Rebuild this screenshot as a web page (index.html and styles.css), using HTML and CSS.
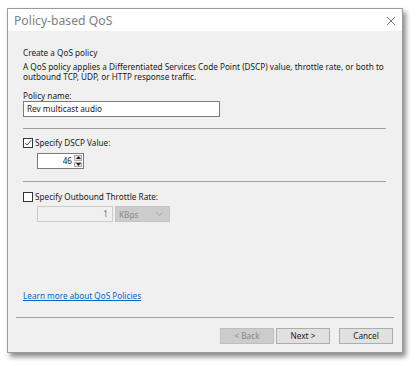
FILE: index.html
```html
<!DOCTYPE html>
<html>
<head>
<meta charset="utf-8">
<link rel="stylesheet" href="styles.css">
</head>
<body>
<div class="window">
  <div class="titlebar">
    <span class="title">Policy-based QoS</span>
    <svg class="close" width="10" height="10" viewBox="0 0 10 10"><path d="M1 1 L9 9 M9 1 L1 9" stroke="#7a7a7a" stroke-width="1" fill="none"/></svg>
  </div>
  <div class="content">
    <div class="heading">Create a QoS policy</div>
    <div class="desc">A QoS policy applies a Differentiated Services Code Point (DSCP) value, throttle rate, or both to outbound TCP, UDP, or HTTP response traffic.</div>
    <div class="label">Policy name:</div>
    <div class="textbox">Rev multicast audio</div>
    <div class="sep"></div>
    <div class="check-row">
      <span class="checkbox checked"><svg width="10" height="10" viewBox="0 0 10 10"><path d="M1.5 5 L4 7.5 L9 1.5" stroke="#222" stroke-width="1.1" fill="none"/></svg></span>
      <span>Specify DSCP Value:</span>
    </div>
    <div class="spin">
      <span class="spin-val">46</span>
      <span class="spin-btns">
        <span class="spin-btn"><svg width="5" height="3" viewBox="0 0 5 3"><path d="M0 3 L2.5 0 L5 3Z" fill="#222"/></svg></span>
        <span class="spin-btn"><svg width="5" height="3" viewBox="0 0 5 3"><path d="M0 0 L2.5 3 L5 0Z" fill="#222"/></svg></span>
      </span>
    </div>
    <div class="sep sep2"></div>
    <div class="check-row">
      <span class="checkbox"></span>
      <span>Specify Outbound Throttle Rate:</span>
    </div>
    <div class="rate-row">
      <span class="rate-box">1</span>
      <span class="combo">KBps<svg width="7" height="4" viewBox="0 0 7 4"><path d="M0.5 0.5 L3.5 3.5 L6.5 0.5" stroke="#a0a0a0" fill="none"/></svg></span>
    </div>
    <div class="spacer"></div>
    <a class="link" href="#">Learn more about QoS Policies</a>
  </div>
  <div class="footer">
    <div class="btn disabled">&lt; Back</div>
    <div class="btn">Next &gt;</div>
    <div class="btn cancel">Cancel</div>
  </div>
</div>
</body>
</html>
```
FILE: styles.css
```css
html, body {
  margin: 0;
  padding: 0;
  background: #ffffff;
}
body {
  font-family: "Noto Sans", "Open Sans", sans-serif;
  font-size: 8.2px;
  color: #1a1a1a;
  width: 416px;
  height: 366px;
  overflow: hidden;
}
.window {
  margin: 8px 0 0 7px;
  width: 396px;
  height: 345px;
  box-sizing: border-box;
  border: 1px solid #9c9c9c;
  background: #f0f0f0;
  display: flex;
  flex-direction: column;
  box-shadow: 3px 4px 5px rgba(0, 0, 0, 0.45);
}
.titlebar {
  height: 22px;
  background: #ffffff;
  display: flex;
  align-items: center;
  justify-content: space-between;
  padding: 0 6px 0 6px;
  flex: none;
}
.title {
  font-size: 12.2px;
  color: #808080;
  font-family: "Noto Sans", sans-serif;
}
.close {
  margin-top: 2px;
}
.content {
  flex: 1;
  display: flex;
  flex-direction: column;
  padding: 16px 9px 0 15px;
}
.heading {
  line-height: 11px;
}
.desc {
  margin-top: 4px;
  line-height: 10px;
  width: 370px;
}
.label {
  margin-top: 8px;
  line-height: 11px;
}
.textbox {
  margin-top: 0;
  width: 197px;
  height: 16px;
  box-sizing: border-box;
  border: 1px solid #7a7a7a;
  background: #ffffff;
  line-height: 14px;
  padding-left: 3px;
}
.sep {
  margin-top: 11px;
  height: 1px;
  background: #a0a0a0;
  width: 363px;
}
.check-row {
  margin-top: 8px;
  display: flex;
  align-items: center;
  gap: 2px;
  line-height: 11px;
}
.checkbox {
  width: 10px;
  height: 10px;
  box-sizing: border-box;
  border: 1px solid #333333;
  background: #ffffff;
  display: flex;
  align-items: center;
  justify-content: center;
  flex: none;
}
.spin {
  margin: 5px 0 0 14px;
  width: 47px;
  height: 16px;
  box-sizing: border-box;
  border: 1px solid #7a7a7a;
  background: #ffffff;
  display: flex;
}
.spin-val {
  flex: 1;
  text-align: right;
  line-height: 14px;
  padding-right: 2px;
}
.spin-btns {
  width: 8px;
  display: flex;
  flex-direction: column;
  gap: 1px;
  padding: 1px 1px 1px 0;
}
.spin-btn {
  flex: 1;
  background: #e4e4e4;
  border: 1px solid #adadad;
  display: flex;
  align-items: center;
  justify-content: center;
  box-sizing: border-box;
}
.sep2 {
  margin-top: 12px;
}
.sep2 + .check-row {
  margin-top: 9px;
}
.rate-row {
  margin: 4px 0 0 14px;
  display: flex;
  gap: 2px;
}
.rate-box {
  width: 76px;
  height: 16px;
  box-sizing: border-box;
  border: 1px solid #cccccc;
  background: #f0f0f0;
  color: #6d6d6d;
  text-align: right;
  line-height: 14px;
  padding-right: 4px;
}
.combo {
  width: 55px;
  height: 16px;
  box-sizing: border-box;
  background: #cccccc;
  border: 1px solid #c4c4c4;
  color: #8a8a8a;
  display: flex;
  align-items: center;
  justify-content: space-between;
  padding: 0 6px 0 3px;
}
.spacer {
  flex: 1;
}
.link {
  color: #0066cc;
  text-decoration: underline;
  line-height: 11px;
  margin-bottom: 16px;
  align-self: flex-start;
}
.footer {
  flex: none;
  margin: 0 8px 0 8px;
  border-top: 1px solid #a0a0a0;
  padding: 10px 1px 8px 0;
  display: flex;
  justify-content: flex-end;
  gap: 2px;
}
.btn {
  width: 54px;
  height: 16px;
  box-sizing: border-box;
  border: 1px solid #adadad;
  background: #e1e1e1;
  text-align: center;
  line-height: 14px;
  color: #1a1a1a;
}
.btn.disabled {
  background: #cccccc;
  border-color: #bfbfbf;
  color: #8a8a8a;
}
.btn.cancel {
  margin-left: 7px;
}
```
